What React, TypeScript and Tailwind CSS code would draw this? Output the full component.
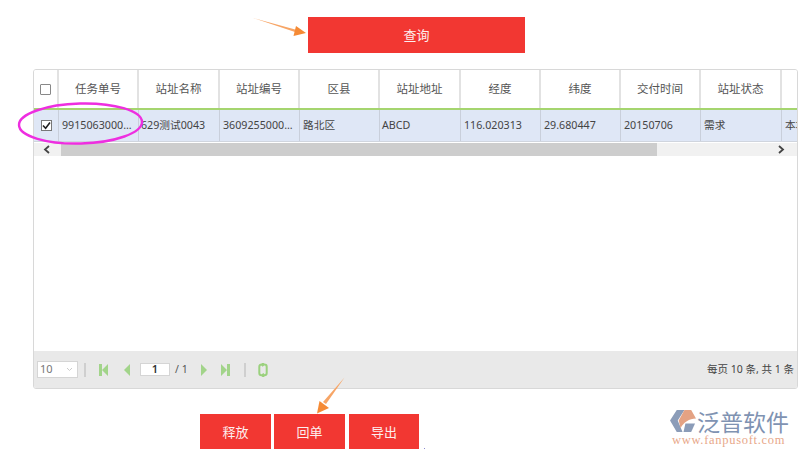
const FONT = "font-['Noto_Sans','Noto_Sans_CJK_SC',sans-serif]"

const COLUMNS = [
  { label: '任务单号', value: '9915063000...', width: 'w-[80px]', pad: 'pl-[3px]' },
  { label: '站址名称', value: '629测试0043', width: 'w-[81px]', pad: 'pl-[3px] -indent-[1px]' },
  { label: '站址编号', value: '3609255000...', width: 'w-[80px]', pad: 'pl-[3px]' },
  { label: '区县', value: '路北区', width: 'w-[80px]', pad: 'pl-[3px]' },
  { label: '站址地址', value: 'ABCD', width: 'w-[81px]', pad: 'pl-[2px]' },
  { label: '经度', value: '116.020313', width: 'w-[80px]', pad: 'pl-[3px]' },
  { label: '纬度', value: '29.680447', width: 'w-[80px]', pad: 'pl-[3px]' },
  { label: '交付时间', value: '20150706', width: 'w-[80px]', pad: 'pl-[3px]' },
  { label: '站址状态', value: '需求', width: 'w-[81px]', pad: 'pl-[3px]' },
  { label: '', value: '本地', width: 'w-[80px]', pad: 'pl-[3px]' },
]

function RedButton({ label, className }: { label: string; className: string }) {
  return (
    <button className={`flex items-center justify-center bg-[#f23732] pt-[2px] text-[13px] text-[#fdeeee] ${className}`}>
      {label}
    </button>
  )
}

function PagerIcon({ d }: { d: string }) {
  return (
    <svg width="10" height="14" viewBox="0 0 10 14" className="shrink-0">
      <path d={d} fill="#a2d48a" />
    </svg>
  )
}

export default function App() {
  return (
    <div className={`relative h-[454px] w-[800px] overflow-hidden bg-white text-[#444] ${FONT}`}>
      <div className="ml-[308px] pt-[17px]">
        <RedButton label="查询" className="h-[36px] w-[217px]" />
      </div>

      {/* Grid panel */}
      <div className="ml-[33px] mt-[16px] flex h-[320px] w-[765px] flex-col overflow-hidden rounded-[3px] border border-[#d8d8d8]">
        {/* Header */}
        <div className="flex h-[38px] shrink-0 bg-white text-[11.5px] text-[#555]">
          <div className="flex w-[25px] shrink-0 items-center justify-center border-r-2 border-[#e2e2e2]">
            <span className="h-[11px] w-[11px] rounded-[1px] border border-[#888] bg-white" />
          </div>
          {COLUMNS.map((col) => (
            <div key={col.label || 'extra'} className={`flex shrink-0 items-center justify-center border-r-2 border-[#e2e2e2] ${col.width}`}>
              {col.label}
            </div>
          ))}
        </div>
        <div className="h-[2px] shrink-0 bg-[#a5d56f]" />

        {/* Row */}
        <div className="flex h-[32px] shrink-0 border-b border-[#d0d5de] bg-[#dfe7f6] text-[10.7px] text-[#444]">
          <div className="flex w-[25px] shrink-0 items-center justify-center border-r border-[#c9cfdb]">
            <span className="flex h-[11px] w-[11px] items-center justify-center border border-[#777] bg-white">
              <svg width="9" height="9" viewBox="0 0 9 9">
                <path d="M1 4.5 L3.6 7.2 L8 1.4" fill="none" stroke="#222" strokeWidth="1.6" />
              </svg>
            </span>
          </div>
          {COLUMNS.map((col) => (
            <div key={col.value} className={`flex shrink-0 items-center overflow-hidden whitespace-nowrap border-r border-[#c9cfdb] ${col.width} ${col.pad}`}>
              {col.value}
            </div>
          ))}
        </div>

        {/* Horizontal scrollbar */}
        <div className="mt-px flex h-[13px] shrink-0 items-center bg-[#f1f1f1]">
          <div className="flex w-[27px] shrink-0 justify-center pr-[1px]">
            <svg width="8" height="9" viewBox="0 0 8 9">
              <path d="M6 1 L2 4.5 L6 8" fill="none" stroke="#444" strokeWidth="1.8" />
            </svg>
          </div>
          <div className="h-full w-[596px] shrink-0 bg-[#cdcdcd]" />
          <div className="flex flex-1 justify-end pr-[12px]">
            <svg width="8" height="9" viewBox="0 0 8 9">
              <path d="M2 1 L6 4.5 L2 8" fill="none" stroke="#444" strokeWidth="1.8" />
            </svg>
          </div>
        </div>

        <div className="flex-1 bg-white" />

        {/* Pager */}
        <div className="flex h-[37px] shrink-0 items-center bg-[#e9e9e9] px-[3px] text-[10px] text-[#555]">
          <div className="flex h-[17px] w-[41px] items-center justify-between border border-[#d5d5d5] bg-white pl-[2px] pr-[4px] text-[11px] text-[#777]">
            <span>10</span>
            <svg width="7" height="5" viewBox="0 0 7 5">
              <path d="M1 1 L3.5 3.5 L6 1" fill="none" stroke="#ccc" strokeWidth="1" />
            </svg>
          </div>
          <div className="ml-[6px] h-[14px] w-[2px] bg-[#cfcfcf]" />
          <div className="ml-[13px]">
            <PagerIcon d="M0 1 H3 V13 H0 Z M9 1 V13 L3 7 Z" />
          </div>
          <div className="ml-[13px]">
            <PagerIcon d="M8 1 V13 L2 7 Z" />
          </div>
          <div className="ml-[8px] flex h-[13px] w-[30px] items-center justify-center border border-[#d5d5d5] bg-white text-[11px] font-semibold text-[#333]">
            1
          </div>
          <span className="ml-[5px] text-[10.5px]">/ 1</span>
          <div className="ml-[11px]">
            <PagerIcon d="M2 1 V13 L8 7 Z" />
          </div>
          <div className="ml-[12px]">
            <PagerIcon d="M0 1 L6 7 L0 13 Z M6 1 H9 V13 H6 Z" />
          </div>
          <div className="ml-[13px] h-[14px] w-[2px] bg-[#cfcfcf]" />
          <div className="ml-[12px]">
            <svg width="10" height="14" viewBox="0 0 10 14">
              <path d="M5.8 1.4 H3.6 A2.3 2.3 0 0 0 1.3 3.7 V10 A2.3 2.3 0 0 0 3.6 12.3 H6.4 A2.3 2.3 0 0 0 8.7 10 V3.7 A2.3 2.3 0 0 0 6.4 1.4 M4 0 L6 1.4 L4 3 M6 14 L4 12.3 L6 10.8" fill="none" stroke="#9bd17e" strokeWidth="2" />
            </svg>
          </div>
          <span className="ml-auto text-[10.5px] text-[#444]">每页 10 条, 共 1 条</span>
        </div>
      </div>

      {/* Action buttons */}
      <div className="ml-[200px] mt-[25px] flex items-end gap-[3px]">
        <RedButton label="释放" className="h-[35px] w-[71px]" />
        <RedButton label="回单" className="h-[35px] w-[71px]" />
        <RedButton label="导出" className="ml-[1px] h-[35px] w-[70px]" />
        <span className="ml-[2px] h-px w-px bg-[#8a8ad0]" />
      </div>

      {/* Annotations drawn over the screenshot */}
      <svg width="800" height="454" viewBox="0 0 800 454" className="pointer-events-none absolute left-0 top-0">
        <path d="M253 18 L297 30 L296.5 32.5 Z" fill="#f7a566" />
        <path d="M306 33 L296 26 L293.5 36 Z" fill="#f58a35" />
        <path d="M344.5 377.5 L326 404 L323 402 Z" fill="#f7a566" />
        <path d="M317 413.5 L319.5 401 L329 408 Z" fill="#f58a35" />
        <ellipse cx="80.5" cy="123.5" rx="61.5" ry="20" fill="none" stroke="#ee2ee0" strokeWidth="2.4" transform="rotate(-1.5 80.5 123.5)" />
      </svg>

      {/* Watermark logo */}
      <div className="absolute left-[670px] top-[409px] flex w-[126px] flex-col">
        <div className="flex h-[24px] items-center">
          <svg width="27" height="25" viewBox="0 0 28 26" className="shrink-0">
            <path d="M7 1 H15 L8 12 L13 24 H7 L0 12 Z" fill="#8b9cb8" />
            <path d="M15 1 H22 L27 10 C20 10 14 14 11 20 L9 12 Z" fill="#e4a283" />
            <path d="M16 15 H26 L22 24 H14 Z" fill="#8b9cb8" />
          </svg>
          <span className="whitespace-nowrap text-[23px] leading-[24px] font-['Noto_Sans_CJK_SC',sans-serif] text-[#7f93b2]">
            泛普软件
          </span>
        </div>
        <span className="mt-[1px] whitespace-nowrap pl-[2px] text-[12.5px] leading-[12px] tracking-[0.7px] text-[#e8a88a] font-['Liberation_Serif',serif]">
          www.fanpusoft.com
        </span>
      </div>
    </div>
  )
}
